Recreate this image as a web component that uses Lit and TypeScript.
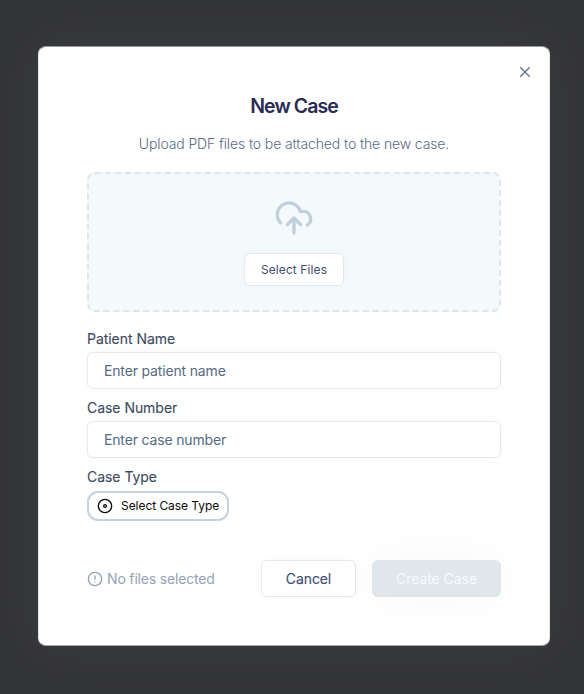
import { LitElement, html, css, svg } from "lit";
import { customElement } from "lit/decorators.js";

const icon = (cls: string, width: number, body: unknown) => html`
  <svg class=${cls} viewBox="0 0 24 24" fill="none" stroke="currentColor"
    stroke-width=${width} stroke-linecap="round" stroke-linejoin="round">${body}</svg>`;

@customElement("app-root")
export class AppRoot extends LitElement {
  static styles = css`
    :host {
      display: flex;
      flex-direction: column;
      align-items: center;
      box-sizing: border-box;
      height: 694px;
      padding: 46px 0 0 4px;
      overflow: hidden;
      background: #333435;
      font-family: Inter, "Liberation Sans", sans-serif;
      font-size: 14px;
      line-height: 20px;
      color: #475569;
    }
    * { box-sizing: border-box; }
    svg { display: block; flex: none; }
    button, input { font: inherit; margin: 0; outline: none; }
    .modal {
      position: relative;
      width: 512px;
      height: 600px;
      padding: 47px 48px 0;
      border: 1px solid #e0e3e7;
      border-top-color: #999a9c;
      border-bottom-color: #a5a7a9;
      border-radius: 8px;
      background: #fff;
      box-shadow: 0 0 50px rgba(84, 94, 108, 0.27);
    }
    .close {
      position: absolute;
      top: 17px;
      right: 16px;
      padding: 0;
      border: 0;
      background: none;
      color: #64748b;
    }
    .x { width: 16px; height: 16px; }
    h2 {
      margin: 0;
      text-align: center;
      font-size: 19.5px;
      line-height: 24px;
      font-weight: 600;
      letter-spacing: -0.95px;
      color: #2b2a55;
    }
    .lead {
      margin: 16px 0 18px;
      text-align: center;
      line-height: 20px;
      font-weight: 300;
      letter-spacing: -0.12px;
      color: #5b6b82;
    }
    .drop {
      display: flex;
      flex-direction: column;
      align-items: center;
      height: 140px;
      padding-top: 24px;
      border: 2px dashed #dde6ec;
      border-radius: 8px;
      background: #f4f9fc;
    }
    .cloud { width: 40px; height: 40px; color: #c1cedb; }
    .btn {
      display: flex;
      align-items: center;
      justify-content: center;
      padding: 0;
      border: 1px solid #e2e8ee;
      border-radius: 6px;
      background: #fff;
      color: #3f4e70;
      box-shadow: 0 0 8px rgba(0, 0, 0, 0.03);
    }
    .select {
      width: 100px;
      height: 33px;
      margin-top: 15px;
      font-size: 12px;
      letter-spacing: 0.1px;
    }
    label {
      display: block;
      height: 20px;
      letter-spacing: -0.04px;
      -webkit-text-stroke: 0.12px currentColor;
      color: #3d4a5e;
    }
    .fields { margin-top: 17px; }
    input {
      display: block;
      width: 100%;
      height: 37px;
      margin-top: 3px;
      padding: 0 16px;
      border: 1px solid #e3e9ed;
      border-radius: 6px;
      background: #fff;
      letter-spacing: -0.16px;
      box-shadow: 0 0 8px rgba(0, 0, 0, 0.03);
    }
    .next { margin-top: 9px; }
    input::placeholder { color: #566a84; opacity: 1; }
    .type {
      display: flex;
      align-items: center;
      gap: 8px;
      width: 142px;
      height: 30px;
      margin-top: 4px;
      padding: 0 0 0 8px;
      border: 2px solid #c4d1de;
      border-radius: 11px;
      background: #fff;
      color: #0a0a0a;
      font-size: 12px;
      letter-spacing: -0.05px;
      white-space: nowrap;
    }
    .dot { width: 16px; height: 16px; }
    .footer {
      display: flex;
      align-items: center;
      margin-top: 39px;
    }
    .status {
      display: flex;
      align-items: center;
      gap: 4px;
      flex: 1;
      letter-spacing: -0.17px;
      color: #94a3b5;
    }
    .alert { width: 16px; height: 16px; }
    .cancel {
      width: 95px;
      height: 37px;
      letter-spacing: -0.1px;
      -webkit-text-stroke: 0.12px currentColor;
    }
    .create {
      width: 129px;
      height: 37px;
      margin-left: 16px;
      border-color: #dfe6ec;
      background: #dfe6ec;
      color: #f8fafc;
      letter-spacing: -0.05px;
      box-shadow: 0 0 50px rgba(0, 0, 0, 0.035);
    }
  `;

  render() {
    return html`
      <section class="modal" role="dialog">
        <button class="close" aria-label="Close">
          ${icon("x", 2, svg`<path d="M5.5 5.5l13 13M18.5 5.5l-13 13" />`)}
        </button>
        <h2>New Case</h2>
        <p class="lead">Upload PDF files to be attached to the new case.</p>
        <div class="drop">
          ${icon("cloud", 2, svg`<path d="M4 14.9A7 7 0 1 1 15.71 8h1.79a4.5 4.5 0 0 1 2.5 8.24M12 12v9M16 16l-4-4-4 4" />`)}
          <button class="btn select">Select Files</button>
        </div>
        <div class="fields">
          <label for="patient">Patient Name</label>
          <input id="patient" placeholder="Enter patient name" />
          <label class="next" for="number">Case Number</label>
          <input id="number" placeholder="Enter case number" />
          <label class="next">Case Type</label>
          <button class="type">
            ${icon("dot", 2, svg`<circle cx="12" cy="12" r="10" /><circle cx="12" cy="12" r="2" />`)}
            <span>Select Case Type</span>
          </button>
        </div>
        <div class="footer">
          <div class="status">
            ${icon("alert", 2, svg`<circle cx="12" cy="12" r="10" /><path d="M12 7.5v5M12 16.2v.1" />`)}
            <span>No files selected</span>
          </div>
          <button class="btn cancel">Cancel</button>
          <button class="btn create">Create Case</button>
        </div>
      </section>
    `;
  }
}
